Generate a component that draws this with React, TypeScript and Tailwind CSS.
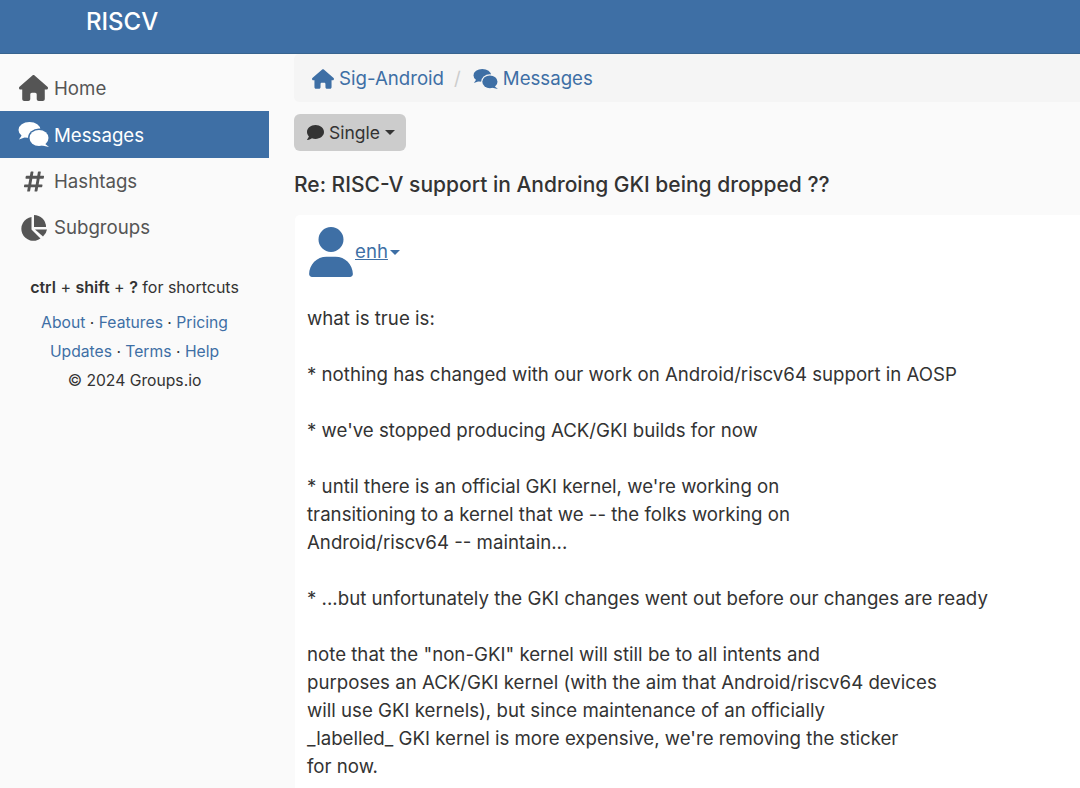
import { FaComment, FaHashtag } from "react-icons/fa";
import { FaHouse, FaUser } from "react-icons/fa6";
import type { ReactNode } from "react";

function CommentsIcon({ className }: { className: string }) {
  return (
    <svg viewBox="0 0 31 25" fill="currentColor" className={className}>
      <mask id="comments-gap">
        <rect width="31" height="25" fill="white" />
        <ellipse cx="21" cy="16" rx="11" ry="9.5" fill="black" />
      </mask>
      <g mask="url(#comments-gap)">
        <ellipse cx="11.5" cy="8" rx="11" ry="8" />
        <path d="M4 13 L1 17.5 L8 15 Z" />
      </g>
      <ellipse cx="21" cy="16" rx="9.5" ry="8" />
      <path d="M26 21 L31 25 L24 23.5 Z" />
    </svg>
  );
}

function PieIcon({ className }: { className: string }) {
  return (
    <svg viewBox="0 0 27 26" fill="currentColor" className={className}>
      <path d="M11.5 2 A12 12 0 1 0 20.5 23.5 L11.5 14.5 Z" />
      <path d="M14 0 A12 12 0 0 1 26 12 L14 12 Z" />
      <path d="M15 14.5 H27 A12 12 0 0 1 23 21.5 Z" />
    </svg>
  );
}

function NavItem({ icon, label, active, low }: { icon: ReactNode; label: string; active?: boolean; low?: boolean }) {
  return (
    <div
      className={`flex items-center text-[18.67px] ${
        active ? "h-[47px] bg-[#3e6fa5] text-white" : "h-[46.5px] text-[#555555]"
      }`}
    >
      <span className="flex w-[54px] shrink-0 justify-center pl-[13px]">{icon}</span>
      <span className={low ? "pt-[2px]" : "pt-[1px]"}>{label}</span>
    </div>
  );
}

function Sep() {
  return <span className="text-[#333333]"> · </span>;
}

const paragraphs = [
  ["what is true is:"],
  ["* nothing has changed with our work on Android/riscv64 support in AOSP"],
  ["* we've stopped producing ACK/GKI builds for now"],
  [
    "* until there is an official GKI kernel, we're working on",
    "transitioning to a kernel that we -- the folks working on",
    "Android/riscv64 -- maintain...",
  ],
  ["* ...but unfortunately the GKI changes went out before our changes are ready"],
  [
    'note that the "non-GKI" kernel will still be to all intents and',
    "purposes an ACK/GKI kernel (with the aim that Android/riscv64 devices",
    "will use GKI kernels), but since maintenance of an officially",
    "_labelled_ GKI kernel is more expensive, we're removing the sticker",
    "for now.",
  ],
];

export default function App() {
  return (
    <div className="h-[788px] w-[1080px] overflow-hidden bg-[#fafafa] font-['Inter',sans-serif] text-[#333333]">
      <header className="h-[54px] border-b border-[#38648f] bg-[#3e6fa5]">
        <div className="pl-[86px] pt-[6px] text-[24px] leading-[32px] font-medium text-white">RISCV</div>
      </header>

      <div className="flex">
        <aside className="w-[269px] shrink-0 pt-[10.5px]">
          <NavItem icon={<FaHouse className="h-[26px] w-[29px]" />} label="Home" low />
          <NavItem icon={<CommentsIcon className="h-[25px] w-[31px]" />} label="Messages" active low />
          <NavItem icon={<FaHashtag className="h-[23px] w-[22px]" />} label="Hashtags" />
          <NavItem icon={<PieIcon className="h-[26px] w-[27px]" />} label="Subgroups" />

          <div className="mt-[22px] text-center text-[15.7px] leading-[29px]">
            <div className="mb-[6px] text-[16px]">
              <b className="font-semibold">ctrl</b> + <b className="font-semibold">shift</b> +{" "}
              <b className="font-semibold">?</b> for shortcuts
            </div>
            <div className="text-[#3e6fa5]">
              About<Sep />Features<Sep />Pricing
            </div>
            <div className="text-[#3e6fa5]">
              Updates<Sep />Terms<Sep />Help
            </div>
            <div>© 2024 Groups.io</div>
          </div>
        </aside>

        <main className="ml-[25px] min-w-0 flex-1">
          <nav className="flex h-[48px] items-center rounded-l-[5px] bg-[#f5f5f5] pt-[1px] pl-[18px] text-[18.67px] text-[#3e6fa5]">
            <FaHouse className="mr-[5px] h-[20px] w-[22px]" />
            <span>Sig-Android</span>
            <span className="mr-[12px] ml-[10px] text-[#cccccc]">/</span>
            <CommentsIcon className="mr-[5px] h-[20px] w-[25px]" />
            <span>Messages</span>
          </nav>

          <button className="mt-[12px] flex h-[37px] w-[112px] items-center rounded-[6px] bg-[#cccccc] pl-[13px] text-[17.5px]">
            <FaComment className="mr-[5px] h-[17px] w-[17px]" />
            <span className="pt-[1px]">Single</span>
            <span className="ml-[5px] h-0 w-0 border-x-[5px] border-t-[5px] border-x-transparent border-t-[#333333]" />
          </button>

          <h1 className="mt-[18px] pt-[1px] text-[21px] leading-[30px] font-medium">
            Re: RISC-V support in Androing GKI being dropped ??
          </h1>

          <article className="mt-[15px] ml-[1px] h-[600px] rounded-tl-[5px] bg-white pl-[12px] text-[18.67px] leading-[28px]">
            <div className="flex items-center pt-[12px]">
              <FaUser className="ml-[2px] h-[50px] w-[44px] text-[#3e6fa5]" />
              <a className="ml-[2px] text-[#3e6fa5] underline">enh</a>
              <span className="ml-[2px] h-0 w-0 border-x-[5px] border-t-[5px] border-x-transparent border-t-[#3e6fa5]" />
            </div>
            <div className="mt-[28px]">
              {paragraphs.map((lines, i) => (
                <p key={i} className="mb-[28px]">
                  {lines.map((line, j) => (
                    <span key={j} className="block whitespace-nowrap">
                      {line}
                    </span>
                  ))}
                </p>
              ))}
            </div>
          </article>
        </main>
      </div>
    </div>
  );
}
